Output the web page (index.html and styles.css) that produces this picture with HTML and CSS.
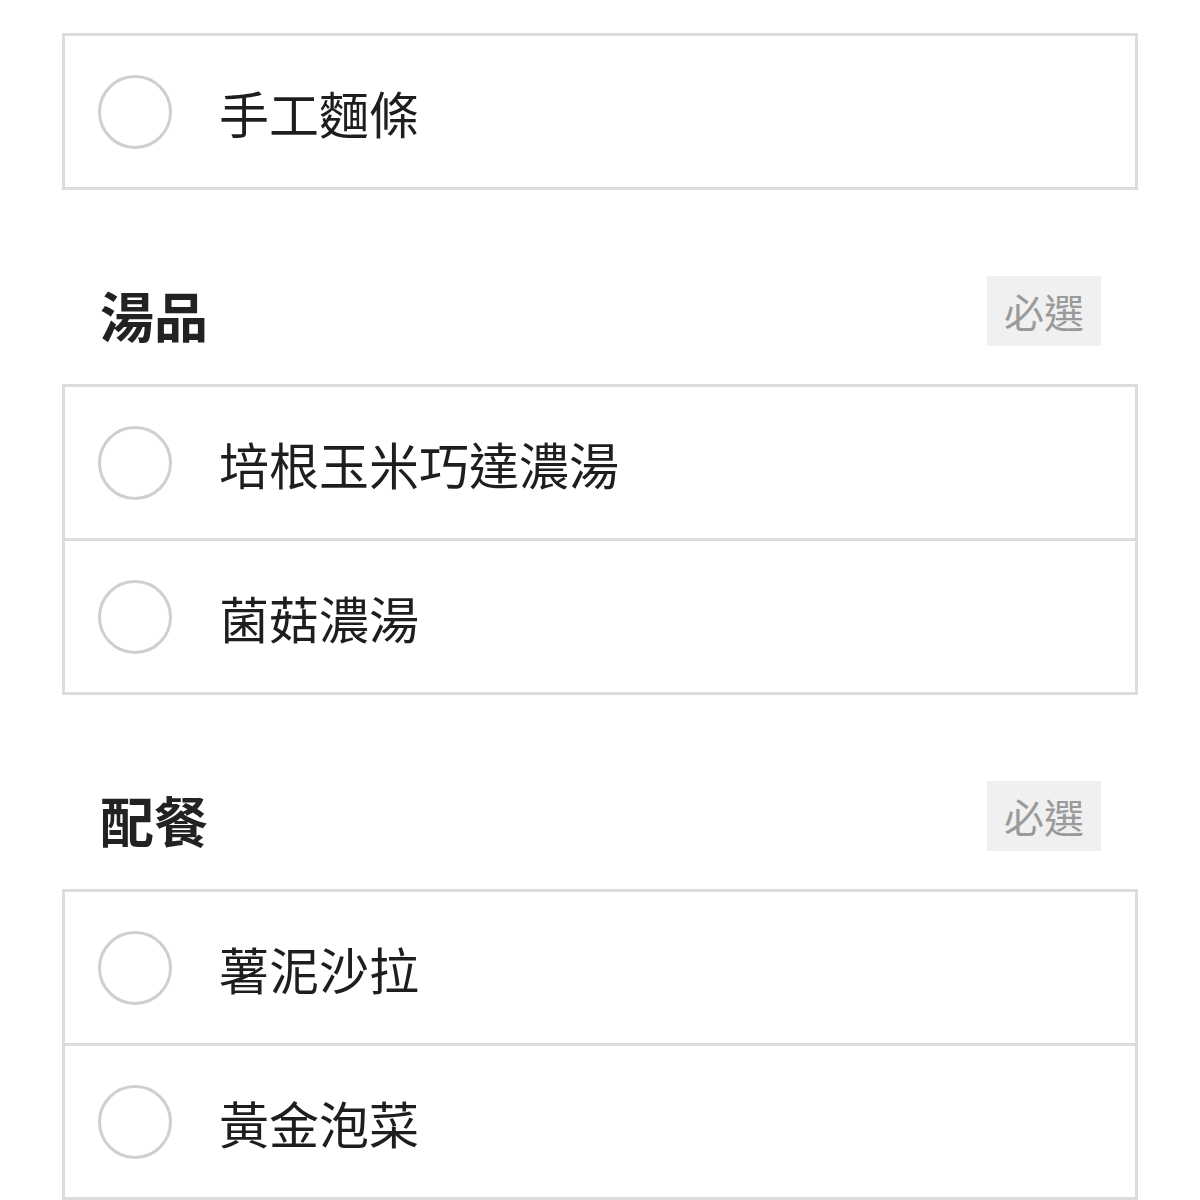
FILE: index.html
```html
<!DOCTYPE html>
<html lang="zh-Hant">
<head>
<meta charset="utf-8">
<link rel="stylesheet" href="styles.css">
</head>
<body>
<div class="page">
  <div class="options first">
    <div class="option"><span class="radio"></span><span class="label">手工麵條</span></div>
  </div>

  <div class="group-head">
    <h2 class="group-title">湯品</h2>
    <span class="badge">必選</span>
  </div>
  <div class="options">
    <div class="option"><span class="radio"></span><span class="label">培根玉米巧達濃湯</span></div>
    <div class="option"><span class="radio"></span><span class="label">菌菇濃湯</span></div>
  </div>

  <div class="group-head">
    <h2 class="group-title">配餐</h2>
    <span class="badge">必選</span>
  </div>
  <div class="options">
    <div class="option"><span class="radio"></span><span class="label">薯泥沙拉</span></div>
    <div class="option"><span class="radio"></span><span class="label">黃金泡菜</span></div>
  </div>
</div>
</body>
</html>
```
FILE: styles.css
```css
html, body {
  margin: 0;
  padding: 0;
  background: #fff;
}
body {
  font-family: "Noto Sans CJK TC", "Noto Sans", sans-serif;
  color: #222;
}
.page {
  padding: 33px 62px 0;
}
.options {
  border: 3px solid #dcdcdc;
}
.option {
  height: 151px;
  display: flex;
  align-items: center;
  padding-left: 33px;
  box-sizing: border-box;
}
.option + .option {
  border-top: 3px solid #dcdcdc;
  height: 154px;
}
.radio {
  width: 74px;
  height: 74px;
  box-sizing: border-box;
  border: 3px solid #cfcfcf;
  border-radius: 50%;
  flex: none;
}
.label {
  margin-left: 47px;
  font-size: 50px;
  line-height: 1;
  color: #1e1e1e;
}
.group-head {
  display: flex;
  justify-content: space-between;
  align-items: center;
  padding: 86px 37px 38px 38px;
}
.group-title {
  margin: 0;
  padding-top: 8px;
  font-size: 54px;
  font-weight: 700;
  line-height: 62px;
  color: #222;
}
.badge {
  width: 114px;
  height: 70px;
  background: #f0f0f0;
  color: #9a9a9a;
  font-size: 40px;
  line-height: 70px;
  text-align: center;
}
```
